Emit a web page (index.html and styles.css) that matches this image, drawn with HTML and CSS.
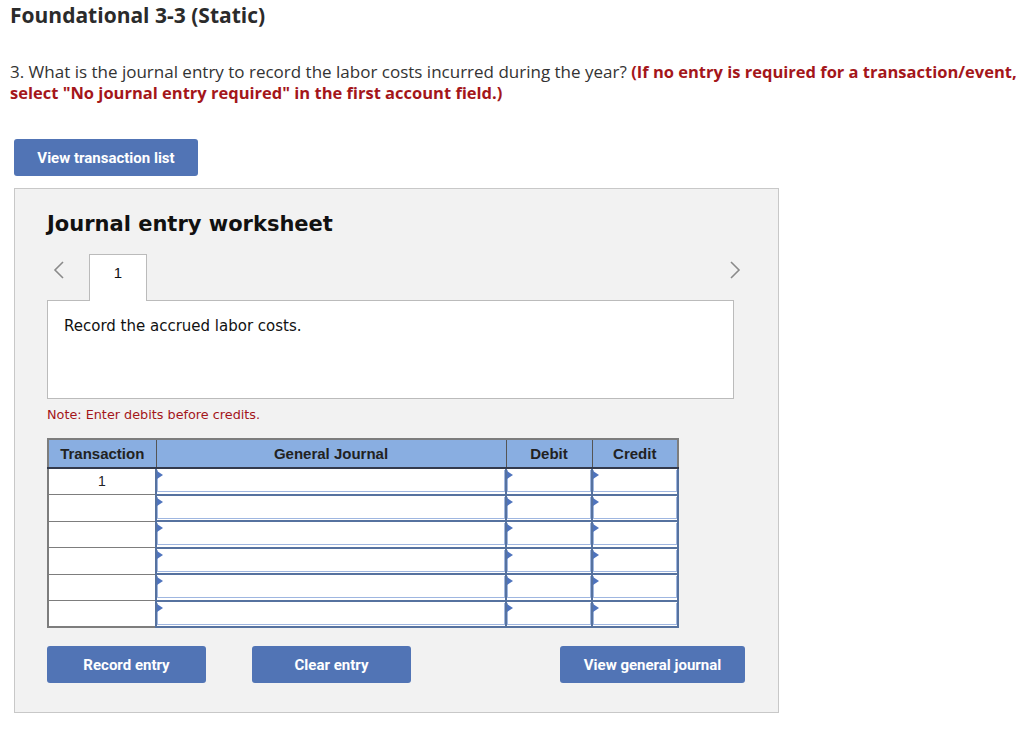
FILE: index.html
```html
<!DOCTYPE html>
<html>
<head>
<meta charset="utf-8">
<link rel="stylesheet" href="styles.css">
</head>
<body>
<h1 class="title">Foundational 3-3 (Static)</h1>
<p class="question">3. What is the journal entry to record the labor costs incurred during the year? <strong class="hint">(If no entry is required for a transaction/event,<br>select "No journal entry required" in the first account field.)</strong></p>
<button class="btn btn-list">View transaction list</button>
<section class="panel">
  <h2 class="ws-title">Journal entry worksheet</h2>
  <div class="tabs">
    <span class="chev chev-left"><svg width="12" height="18" viewBox="0 0 12 18"><path d="M10 1 L2 9 L10 17" fill="none" stroke="#8a8a8a" stroke-width="1.6"/></svg></span>
    <div class="tab">1</div>
    <span class="chev chev-right"><svg width="12" height="18" viewBox="0 0 12 18"><path d="M2 1 L10 9 L2 17" fill="none" stroke="#8a8a8a" stroke-width="1.6"/></svg></span>
  </div>
  <div class="desc">Record the accrued labor costs.</div>
  <p class="note">Note: Enter debits before credits.</p>
  <table class="journal">
    <thead>
      <tr><th class="c-tr">Transaction</th><th class="c-gj">General Journal</th><th class="c-amt">Debit</th><th class="c-amt">Credit</th></tr>
    </thead>
    <tbody>
      <tr><td class="tr">1</td><td class="in"><div class="field"></div></td><td class="in"><div class="field"></div></td><td class="in"><div class="field"></div></td></tr>
      <tr><td class="tr"></td><td class="in"><div class="field"></div></td><td class="in"><div class="field"></div></td><td class="in"><div class="field"></div></td></tr>
      <tr><td class="tr"></td><td class="in"><div class="field"></div></td><td class="in"><div class="field"></div></td><td class="in"><div class="field"></div></td></tr>
      <tr><td class="tr"></td><td class="in"><div class="field"></div></td><td class="in"><div class="field"></div></td><td class="in"><div class="field"></div></td></tr>
      <tr><td class="tr"></td><td class="in"><div class="field"></div></td><td class="in"><div class="field"></div></td><td class="in"><div class="field"></div></td></tr>
      <tr><td class="tr"></td><td class="in"><div class="field"></div></td><td class="in"><div class="field"></div></td><td class="in"><div class="field"></div></td></tr>
    </tbody>
  </table>
  <div class="actions">
    <button class="btn btn-record">Record entry</button>
    <button class="btn btn-clear">Clear entry</button>
    <button class="btn btn-view">View general journal</button>
  </div>
</section>
</body>
</html>
```
FILE: styles.css
```css
* { box-sizing: border-box; }
body {
  margin: 0;
  background: #fff;
  font-family: "Open Sans", Lato, sans-serif;
  color: #333;
}
.title {
  margin: 0;
  padding: 2px 10px 0;
  font-size: 21px;
  line-height: 26px;
  font-weight: 700;
  color: #2b2b2b;
}
.question {
  margin: 33px 0 0;
  padding: 0 10px;
  font-size: 17px;
  line-height: 21px;
  color: #333;
  white-space: nowrap;
}
.hint { color: #a4161a; font-weight: 700; font-size: 16.5px; }
.btn {
  display: block;
  border: none;
  border-radius: 3px;
  background: #5174b5;
  color: #fff;
  font-family: Roboto, "Liberation Sans", sans-serif;
  font-weight: 700;
  font-size: 15px;
  height: 37px;
  padding: 0;
  cursor: pointer;
}
.btn-list { margin: 36px 0 0 14px; width: 184px; }
.panel {
  margin: 12px 0 0 14px;
  width: 765px;
  height: 525px;
  background: #f2f2f2;
  border: 1px solid #c8c8c8;
  padding: 0 0 0 32px;
  font-family: "DejaVu Sans", Verdana, sans-serif;
}
.ws-title {
  margin: 0;
  padding-top: 20px;
  font-size: 21px;
  line-height: 30px;
  font-weight: 700;
  color: #111;
}
.tabs {
  margin-top: 15px;
  display: flex;
  align-items: flex-start;
  width: 686px;
  position: relative;
}
.chev { display: block; margin-top: 7px; height: 18px; }
.chev-left { margin-left: 6px; }
.chev-right { margin-left: auto; margin-right: -8px; }
.tab {
  margin-left: 24px;
  width: 58px;
  height: 47px;
  background: #fff;
  border: 1px solid #bbb;
  border-bottom: none;
  text-align: center;
  font-family: "Liberation Sans", Arial, sans-serif;
  font-size: 15px;
  line-height: 36px;
  color: #111;
  position: relative;
  z-index: 1;
  margin-bottom: -1px;
}
.desc {
  width: 687px;
  height: 99px;
  background: #fff;
  border: 1px solid #bbb;
  padding: 16px 16px;
  font-size: 15px;
  line-height: 18px;
  color: #111;
}
.note {
  margin: 9px 0 0;
  font-size: 12.8px;
  line-height: 14px;
  color: #a4161a;
}
.journal {
  margin-top: 16px;
  border-collapse: collapse;
  width: 632px;
  font-family: "Liberation Sans", Arial, sans-serif;
  font-size: 15px;
  background: #fff;
  border: 2px solid #7d7d7d;
}
.journal th {
  height: 29px;
  padding: 0;
  background: #89aee1;
  color: #222;
  font-weight: 700;
  border: 1px solid #555;
  border-bottom: 2px solid #333a4d;
}
.c-tr { width: 108px; }
.c-gj { width: 350px; }
.c-amt { width: 86px; }
.journal td {
  height: 26.5px;
  padding: 0;
}
.journal td.tr {
  text-align: center;
  border: 1px solid #7d7d7d;
  color: #222;
  vertical-align: top;
  line-height: 24px;
  font-size: 14px;
}
.journal td.in {
  border: 2px solid #56729f;
  padding: 0;
}
.field {
  position: relative;
  height: 22px;
  border: 1px solid #9fb6e0;
  border-top: none;
  background: #fff;
}
.field::before {
  content: "";
  position: absolute;
  left: -1px;
  top: 1px;
  border-top: 4px solid transparent;
  border-bottom: 4px solid transparent;
  border-left: 6px solid #4f74bd;
}
.actions {
  margin-top: 18px;
  display: flex;
  width: 698px;
}
.btn-record { width: 159px; }
.btn-clear { width: 159px; margin-left: 46px; }
.btn-view { width: 185px; margin-left: auto; }
```
